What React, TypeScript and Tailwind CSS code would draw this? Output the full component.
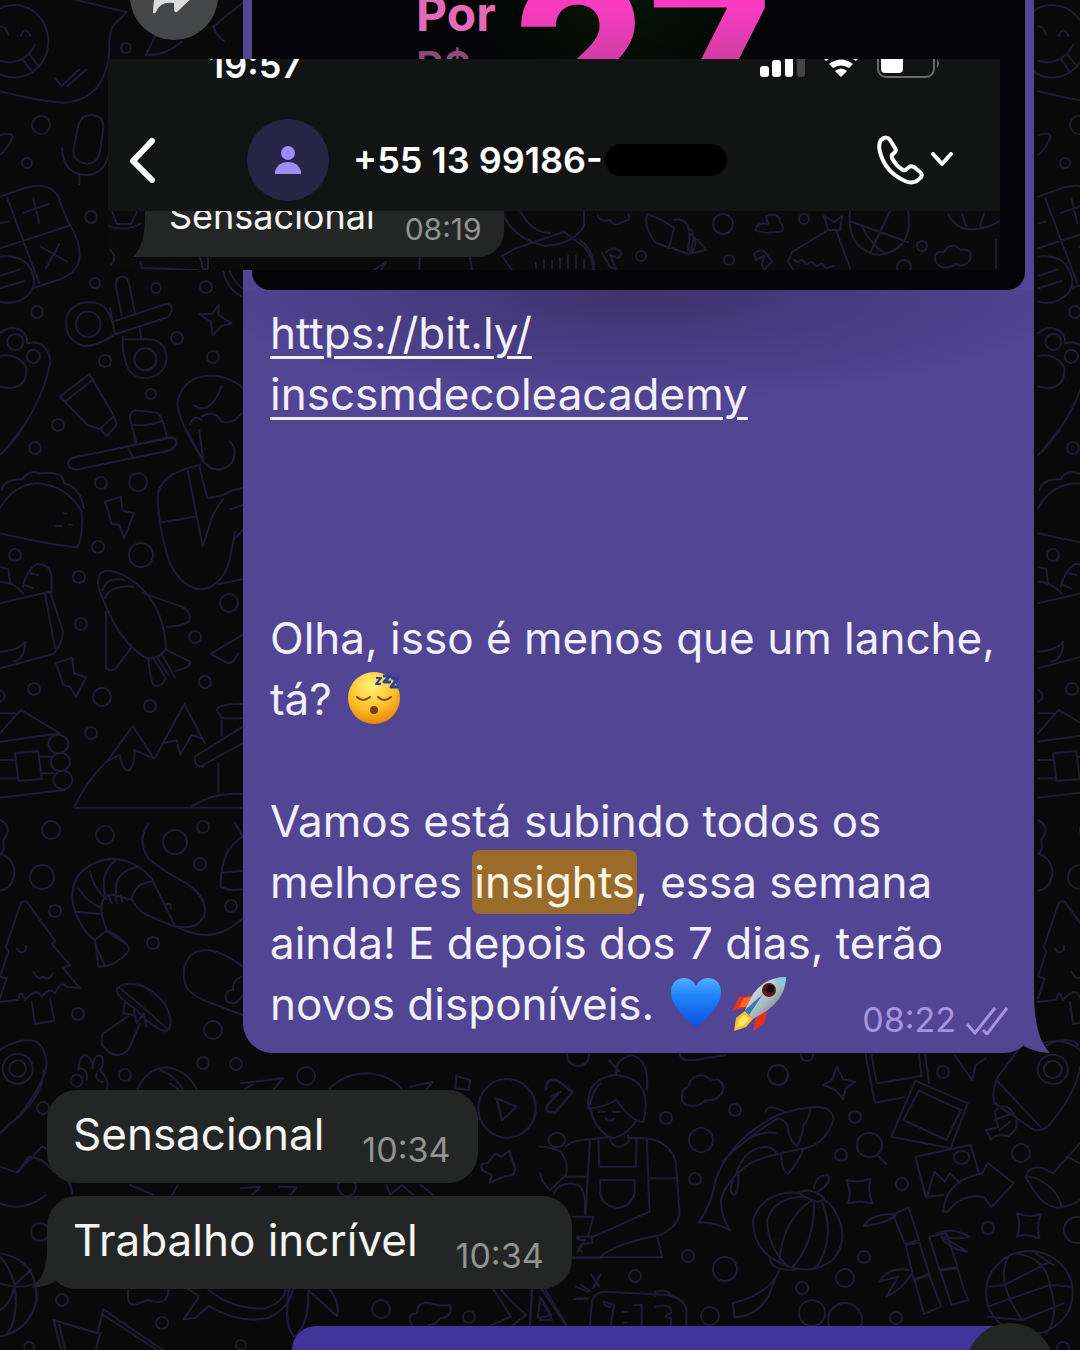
import React from 'react';

/* x, y, radius of the little rings scattered over the wallpaper */
const rings: number[][] = [
  [126, 48, 5], [41, 125, 9], [27, 163, 5], [91, 217, 6], [95, 283, 5], [156, 288, 5], [206, 287, 6],
  [37, 312, 6], [177, 338, 6], [213, 357, 6], [105, 361, 6], [151, 394, 5], [58, 425, 6], [35, 448, 6],
  [101, 483, 6], [138, 482, 9], [98, 547, 6], [141, 555, 12], [15, 555, 6], [79, 577, 6], [229, 603, 9],
  [81, 624, 6], [195, 637, 6], [34, 689, 6], [102, 697, 9], [205, 682, 6], [150, 706, 6], [91, 733, 6],
  [51, 830, 9], [105, 835, 9], [175, 842, 12], [203, 827, 6], [200, 864, 6], [42, 877, 12], [55, 911, 6],
  [231, 906, 6], [153, 943, 6], [78, 1014, 6], [213, 1030, 9], [203, 1063, 6], [236, 1064, 6],
  [125, 1075, 6], [43, 1108, 6], [306, 1076, 9], [40, 1232, 9], [347, 1187, 9], [62, 1300, 6],
  [162, 1323, 6], [381, 1309, 9], [469, 1317, 6], [29, 1347, 5], [241, 1345, 5],
  [778, 1075, 10], [666, 1118, 6], [735, 1110, 6], [701, 1140, 12], [695, 1179, 6], [841, 1155, 6],
  [855, 1117, 6], [943, 1072, 6], [1021, 1153, 9], [902, 1184, 6], [988, 1228, 6], [864, 1257, 6],
  [845, 1278, 9], [725, 1269, 12], [688, 1256, 6], [635, 1276, 6], [802, 1288, 6], [710, 1316, 9],
  [812, 1313, 13], [845, 1320, 17], [896, 1318, 6], [1077, 1230, 13], [1063, 1348, 6], [807, 1055, 6],
  [578, 1055, 11],
];

/* smiley, microphone, calculator, scissors, paw, toothpaste, hat */
const doodlesTop = [
  'M228 0L380 36L342 75Q325 95 328 150Q318 300 190 308Q130 306 0 274',
  'M-60 124a100 106 0 1 0 205 0a100 106 0 1 0 -205 0M0 183Q70 200 105 135M70 180l28 38M90 165l28 36M0 80Q15 75 24 104M62 108Q75 75 92 108',
  'M165 235l20 22l52 -48M203 258l54 -48',
  'M235 375q10 -32 42 -30q35 4 33 40l-10 70q-8 38 -40 36q-38 -4 -40 -38zM186 445q4 80 75 80q50 -2 65 -60M238 525v28',
  'M0 405Q35 395 38 410Q25 445 0 465',
  'M0 590L80 562Q150 545 175 590Q195 650 210 675Q250 740 235 790Q225 820 180 838L98 865M22 595L118 850M0 745L205 678M0 670l25 -5M70 638l75 -25M100 595l18 75M122 740l78 44M178 732l-40 72M0 770Q55 765 80 790Q120 840 90 880Q50 920 0 905M0 828l60 -20M0 865l72 -22',
  'M348 860Q345 828 370 830Q385 832 388 855L405 940M348 860L365 945M340 965L488 915Q515 905 515 930Q512 950 495 955L345 1003L330 925M368 1010Q365 1075 390 1115Q420 1145 460 1130Q505 1110 498 1060Q490 1020 445 1018L368 1018M418 980l6 38M350 1000Q290 1040 250 1038Q190 1020 200 950Q220 900 285 908Q330 915 345 1000M228 973a36 38 0 1 0 73 0a36 38 0 1 0 -73 0M403 1078a33 33 0 1 0 66 0a33 33 0 1 0 -66 0',
  'M657 915L655 945L695 970L665 978L638 1005L632 965L597 942L637 942z',
  'M670 815Q680 865 725 890M690 815Q705 850 728 865',
  'M0 1000Q30 975 60 990Q85 1005 80 1030Q140 1015 152 1085Q130 1190 70 1280L15 1350M22 1026a24 24 0 1 0 48 0a24 24 0 1 0 -48 0M80 1069a20 20 0 1 0 40 0a20 20 0 1 0 -40 0M0 1068Q50 1058 78 1100Q85 1155 35 1165L0 1160',
  'M180 1190L268 1122L340 1245L350 1275L320 1308L300 1288L262 1275zM195 1205L280 1138M300 1288L340 1250',
  'M410 1330L392 1265Q385 1230 410 1232L470 1238Q490 1250 500 1312M400 1275Q450 1280 485 1262M360 1345L505 1312Q530 1310 530 1330Q520 1350 490 1358',
  'M590 1350Q520 1230 535 1195Q560 1120 650 1128Q700 1135 728 1165M580 1215Q630 1250 665 1160M605 1250Q640 1225 665 1265Q700 1275 725 1240M570 1275Q580 1240 605 1260',
  'M438 165L470 100M440 165Q500 165 545 125M640 80Q700 30 728 8M640 80Q650 110 672 122',
];

/* taco, bolt, mouse, shuttle, cabin, mountains */
const doodlesMiddle = [
  'M65 0Q30 50 0 75M205 100Q205 85 225 82L505 25Q530 20 530 40Q525 55 505 62L235 118Q205 120 205 100M385 55l15 30M400 0l5 40',
  'M0 235Q40 165 110 160Q200 165 245 245Q250 320 232 352Q150 345 0 310M5 180Q15 145 68 148Q85 118 120 130Q190 120 192 160Q240 170 252 235M168 288h18M190 250h10M206 284h10',
  'M315 215L362 200L368 242L402 250L372 325L358 285L335 282z',
  'M560 0L610 95L598 0M610 95Q650 140 695 100Q715 60 690 35M563 120L608 350L635 265Q650 230 670 208M598 108L622 205L670 195M600 105Q470 130 473 210Q480 320 510 400Q550 480 610 478Q670 465 690 385L705 305M478 278L585 260M670 195Q690 180 728 175M690 238L728 225M705 325L728 300M655 462L728 448',
  'M295 445Q300 415 345 425Q440 460 480 560Q500 620 497 660Q470 690 440 685Q360 640 310 510Q290 470 295 445M315 505Q330 465 400 470M308 480Q320 440 372 450M425 488L545 530Q580 550 565 575Q545 590 500 590M318 545L318 715Q340 728 352 710L392 655M445 690Q450 740 460 765Q485 775 497 745L458 680M470 680L505 735M485 672L525 742M500 660L570 695Q575 715 525 722',
  'M0 520L150 485L188 600Q190 640 160 672L0 715M135 490L165 655M68 470Q80 420 110 402Q150 400 155 440V485M75 465l25 10M90 430l25 5M0 455Q40 455 70 490M0 665Q60 660 75 635Q75 690 40 695M0 410l25 8l5 40',
  'M168 700L217 683L222 730L258 742L228 802L210 770L190 765z',
  'M0 910L62 840L180 910L0 935M45 970L115 963L125 1048L55 1052zM0 990h45M0 1045h50M122 980h35M125 1030h35M145 942a30 28 0 1 0 60 0a30 28 0 1 0 -60 0M153 996a28 27 0 1 0 57 0a28 27 0 1 0 -57 0M160 1050a28 27 0 1 0 57 0a28 27 0 1 0 -57 0M0 1103L195 1080M0 850h45M0 780Q30 800 0 815',
  'M728 1133H222Q260 1050 325 990L398 888L463 988L553 822L615 940M325 992L360 975Q365 1020 385 1022Q405 1010 403 960L460 985M490 940L530 930L540 975L575 915L605 925M575 1130Q640 1085 728 1092M585 980L728 890M600 1010L728 940M585 980Q580 1010 612 1010M655 1000v85M665 915v-50h63M650 840Q655 820 728 822M650 840l15 25',
  'M728 615L632 672L685 700Q700 700 715 670',
];

/* prawn, fir tree, mushroom, pin */
const doodlesBottom = [
  'M310 120Q205 150 218 250Q240 330 285 360L320 330Q300 280 305 255Q310 220 345 225L395 240M310 120Q390 105 455 175L525 318M455 185Q410 185 395 235Q410 270 440 285L525 320M270 155Q280 205 320 238M235 205Q265 250 302 262M225 275L305 282M315 225Q300 160 345 122M350 230Q335 160 408 142M285 360L295 440Q350 440 388 390Q385 365 325 332M285 370l28 65M320 335l60 38M325 225l10 25M345 225l6 25M362 225l4 20',
  'M445 12Q410 60 445 115Q490 155 560 190Q630 240 612 290Q590 330 530 320Q640 380 728 295M495 255q18 -10 18 12',
  'M0 545L55 540Q60 500 75 540Q110 500 125 530Q150 500 165 520Q185 480 200 500L240 505L190 445L210 435L155 372L165 362L80 245Q65 240 60 255L18 380L25 395L0 470M50 385q10 20 28 5v-12M100 455q18 30 28 15q20 15 30 -10M95 545L105 612L163 602L150 535M0 470l20 5L0 535',
  'M350 510Q360 485 420 495Q500 530 512 600Q512 630 495 635Q440 610 410 570Q350 530 350 510M360 505Q430 560 500 625M375 545l-5 35l30 5M400 560l10 50l20 -30l10 40M385 588L310 640Q295 670 320 690Q350 720 385 690L420 610',
  'M728 440Q640 375 590 395Q540 420 555 490Q565 520 610 540L728 585M725 470Q695 480 700 510Q670 510 680 545Q710 560 728 525',
  'M0 690Q60 650 110 665Q150 700 135 760Q100 840 45 900M8 746a45 45 0 1 0 90 0a45 45 0 1 0 -90 0M28 746a25 25 0 1 0 50 0a25 25 0 1 0 -50 0',
  'M235 750Q240 700 260 705Q275 715 278 745Q280 700 305 708Q315 730 300 750Q330 780 320 808M212 782a18 18 0 1 0 36 0a18 18 0 1 0 -36 0M235 745q30 0 25 35M290 760q-5 25 18 25',
  'M412 808Q440 745 500 742Q560 750 590 808M480 750Q530 770 548 808M510 790l25 18',
  'M0 0Q40 20 10 60Q15 100 0 100Q50 120 42 170Q30 210 0 212M728 50Q660 90 662 200Q690 215 728 208M668 158L728 152M705 10L728 50',
];

/* lower left: pins, heart, globe, play button, camera */
const doodlesFootLeft = [
  'M115 0Q110 90 22 165L0 190M0 290L45 308L110 230Q150 245 140 300Q185 320 188 370M45 308L75 260Q110 260 140 305M0 400Q60 430 120 375',
  'M0 550Q100 570 95 690Q80 780 0 800M0 560Q30 600 38 645Q50 740 20 790M0 640Q50 660 95 640M0 720Q30 700 38 645L80 600',
  'M140 750L160 840M140 750L255 790L270 718L425 840M250 840L262 790M270 735L410 840M155 765L170 840',
  'M335 660Q330 705 350 705L385 690Q440 710 440 660M490 655L520 680L480 748L510 745L545 708Q620 760 700 745Q760 710 765 655M545 660Q610 720 690 715Q740 700 748 655M755 660Q740 770 770 800Q810 760 805 660M805 660L880 738Q890 700 860 655',
  'M630 40L740 25L715 58M640 58l20 -15M860 58Q900 10 960 10Q1020 15 1050 58M1070 50L1130 36L1115 58M1192 18L1228 30L1225 60L1190 55z',
  'M1250 115a75 88 0 1 0 150 0a75 88 0 1 0 -150 0M1297 85L1350 110L1312 150z',
  'M1425 60Q1430 20 1462 35L1495 68L1450 130Q1420 130 1430 105L1465 65L1440 80M1540 110Q1550 60 1568 40M1540 110Q1555 170 1568 175',
  'M1260 300Q1250 280 1275 278L1295 250L1310 262L1330 242L1345 290Q1350 320 1320 318L1280 338L1285 315z',
  'M630 355L680 350L660 374M730 350L775 352L760 374M340 345L400 374M465 345L450 374M1010 345L1020 374L1050 345L1080 374M1100 345L1130 374',
  'M1075 765Q1060 730 1090 730Q1090 690 1125 700Q1150 710 1175 705Q1185 740 1150 745Q1140 765 1120 765M1290 660L1335 740L1285 765M1310 660Q1330 690 1375 735L1340 765M1385 765L1390 658M1425 660L1480 765M1405 745L1412 680L1440 735z',
  'M1495 565h73M1510 500L1545 498L1548 520Q1500 520 1520 545M1505 650l30 15M1500 688h35M1550 655l18 -40',
];

/* lower right: baker, koi, lantern, photos, bamboo, globe */
const doodlesFootRight = [
  'M140 205Q135 130 190 112Q230 95 280 125Q320 160 300 245Q270 250 222 180Q180 205 140 205M148 210Q155 260 205 295Q250 290 280 240M222 105Q215 60 265 45Q320 60 310 150M200 60l30 35M170 215h18M212 215h18M190 235q15 15 25 0',
  'M205 290V305Q225 335 258 305L255 285M75 320Q90 300 150 297L205 292M255 293L310 295Q380 305 395 370L405 520Q400 560 350 585Q220 610 175 650M145 300L132 525M170 300L172 380H278L280 300M310 300L318 515L155 590M175 420H275V460Q260 505 220 503Q180 495 175 460zM320 415H400M75 410H135M95 530H155L140 585M110 590Q100 600 130 600Q120 620 110 635M95 652H355L340 590',
  'M0 320Q30 320 60 335Q85 370 75 405L30 450Q5 430 0 400M40 460Q60 420 110 435Q135 450 130 520M25 300a24 22 0 1 0 48 0a24 22 0 1 0 -48 0',
  'M20 145Q10 120 45 118L95 155L45 215Q15 225 22 195L55 155',
  'M412 175Q410 145 430 140Q440 100 480 108Q500 125 515 118Q540 130 528 160Q510 185 480 180Q460 205 425 195Q412 190 412 175M405 42Q410 65 450 60L540 45',
  'M690 225Q850 170 852 240Q830 310 770 325Q660 345 610 370Q540 420 525 480Q525 530 552 572Q510 545 460 548Q500 490 510 420Q550 300 690 225M655 215Q660 190 710 215M690 235Q720 240 720 270Q730 310 745 318Q760 300 765 255Q780 240 785 205M600 300Q650 270 685 280M530 365Q590 300 690 235M570 400Q590 330 650 320Q680 320 690 345M700 345Q700 390 720 402Q750 370 765 325M560 420Q545 460 565 465Q580 440 575 400',
  'M750 458Q650 450 618 540Q620 630 690 665Q780 715 850 660Q900 600 860 520Q840 480 820 480M750 458Q790 440 825 475Q810 500 750 458M765 470Q680 470 660 540Q660 620 720 680M790 480Q705 540 695 660M795 485Q800 600 735 680M820 488Q860 600 800 685M668 655Q665 690 740 690M795 445Q800 405 835 405Q850 425 808 455M695 690Q670 760 560 790L565 832Q630 830 665 765L685 710',
  'M945 42L972 188L1058 172M962 42L978 130L1108 108L1100 42M1118 42L1130 130M1090 122L1242 190L1192 325L1020 290zM1100 152L1222 210L1180 300L1055 240zM1090 350L1250 315L1275 400M1090 350L1120 470L1170 465M1202 352a22 20 0 1 0 44 0a22 20 0 1 0 -44 0M1125 465L1145 395L1175 425L1190 400L1220 430',
  'M1170 515Q1180 420 1285 400L1300 368L1375 430L1310 502L1290 472Q1220 460 1185 515z',
  'M862 80L880 118L915 125L888 145L880 178L858 150L822 135L848 120zM890 420Q925 430 960 415Q950 455 965 490Q930 480 895 490Q905 455 890 420M1385 520Q1420 535 1455 522Q1440 555 1450 595Q1415 580 1385 590Q1398 555 1385 520',
  'M920 315a36 36 0 1 0 73 0a36 36 0 1 0 -73 0M980 345L1005 372',
  'M1025 525L1070 502L1100 600L1060 612zM1062 615L1102 608L1130 700L1085 718zM1088 720L1130 705L1165 800L1115 822zM1130 590L1180 580L1212 680L1160 690zM1162 692L1212 685L1242 780L1195 795zM940 558Q960 520 1035 522Q1010 550 940 558M1150 580Q1200 560 1248 590Q1220 600 1170 590L1240 635Q1190 630 1165 590M1070 690Q1010 680 985 725L1040 710L1005 770Q1050 750 1080 700',
  'M1295 758a126 125 0 1 0 252 0a126 125 0 1 0 -252 0M1360 650Q1320 720 1400 840L1520 790M1375 640Q1470 650 1480 735Q1510 830 1470 880M1305 740L1350 735L1480 665M1300 800L1480 735L1540 740M1405 840L1300 830M1440 640L1490 675',
  'M1410 0L1330 110Q1310 150 1320 190L1435 270Q1470 275 1490 240Q1560 150 1568 80M1325 120L1460 268M1568 30Q1520 -10 1460 10M1445 88a44 44 0 1 0 88 0a44 44 0 1 0 -88 0M1463 88a26 26 0 1 0 52 0a26 26 0 1 0 -52 0M1205 48L1255 120L1265 75L1295 55M1320 215Q1350 180 1375 220Q1400 260 1360 288Q1320 280 1310 300L1295 270L1330 262L1320 215M1320 240l50 -20M1335 270l30 -25',
  'M1410 410Q1420 375 1460 385L1490 400L1568 310M1415 410Q1450 410 1490 450Q1520 490 1510 502Q1460 510 1410 410M1530 350L1568 370M1510 502Q1550 495 1568 480',
  'M145 855L150 790Q155 755 190 755L370 765Q420 775 425 810V855M335 768V755Q375 745 382 770M185 785L215 795L205 855M185 785Q185 800 205 800M240 815h12M240 848h12M275 795L295 795V855M335 800Q385 790 380 820Q350 830 380 835V855M120 735l25 18M150 705l22 35M108 775h30M10 790L35 840H0M0 740L75 855',
];

type DoodleProps = { paths: string[]; transform: string };

const Doodles: React.FC<DoodleProps> = ({ paths, transform }) => (
  <g transform={transform}>
    {paths.map((d) => (
      <path key={d} d={d} strokeWidth="6" />
    ))}
  </g>
);

const Wallpaper: React.FC = () => (
  <svg
    aria-hidden="true"
    className="absolute inset-0 h-full w-full"
    viewBox="0 0 1080 1350"
    preserveAspectRatio="xMidYMin slice"
    fill="none"
    stroke="#1f1b35"
    strokeWidth="2"
    strokeLinejoin="round"
    strokeLinecap="round"
  >
    <g id="tile">
      <Doodles paths={doodlesTop} transform="scale(.3333)" />
      <Doodles paths={doodlesMiddle} transform="translate(0 430) scale(.3333)" />
      <Doodles paths={doodlesBottom} transform="translate(0 820) scale(.3333)" />
    </g>
    {/* the pattern repeats past the outgoing bubble */}
    <svg x="1034" y="0" width="46" height="1046" viewBox="-4 0 46 1046">
      <use href="#tile" />
      {rings.filter((r) => r[0] < 60 && r[1] < 1040).map(([x, y, r]) => (
        <circle key={`${x}-${y}`} cx={x} cy={y} r={r} />
      ))}
    </svg>
    <Doodles paths={doodlesFootLeft} transform="translate(0 1070) scale(.3827 .3333)" />
    <Doodles paths={doodlesFootRight} transform="translate(540 1040) scale(.3444 .3333)" />
    {rings.map(([x, y, r]) => (
      <circle key={`${x}-${y}`} cx={x} cy={y} r={r} />
    ))}
  </svg>
);

const HeaderWallpaper: React.FC = () => (
  <svg
    aria-hidden="true"
    className="absolute inset-0 h-full w-full"
    viewBox="108 211 892 59"
    preserveAspectRatio="xMaxYMin slice"
    fill="none"
    stroke="#1f1c35"
    strokeWidth="2"
    strokeLinecap="round"
    strokeLinejoin="round"
  >
    <path d="M108 226q18 6 32 -2M112 211l5 13l14 0l6 -13M110 250q8 6 1 15M140 262l2 6l55 2M200 257l3 12l5 0l0 -12M420 257l-1 13M470 257l2 13M374 270l12 -8l-5 8" />
    <path d="M504 216q10 22 40 30q30 -2 40 -20l0 -15M502 256l14 -8l48 -16l14 10q15 10 15 28M502 256l10 14M536 268v-5M544 268v-8M552 268v-7M560 268v-10M568 268v-12M576 268v-12M584 268v-8M520 211q12 22 30 22" />
    <path d="M580 240q14 10 14 30M598 216q2 6 12 4q4 8 12 2q10 -2 6 -8M606 252q10 -8 16 2l-4 4l-8 -3l6 14l-6 -2l-8 -14M647 214q-4 12 8 28l14 6l5 -20q-10 -8 -27 -14M674 220q20 -4 14 30M688 228q10 4 2 24M690 234q10 4 2 18M698 240l8 10l-18 4l-16 -6" />
    <circle cx="723" cy="224" r="10" />
    <circle cx="641" cy="256" r="5" />
    <circle cx="729" cy="260" r="5" />
    <circle cx="804" cy="219" r="5" />
    <circle cx="922" cy="246" r="5" />
    <circle cx="904" cy="267" r="7" />
    <path d="M756 230q0 -8 12 -6l-2 -8q14 -4 14 6q8 10 -4 10q-14 2 -20 -2M824 216l4 14l12 0l2 -14l-8 6zM828 230l-36 22l-4 10l6 8M836 230l14 38M794 260l4 2l4 -2l4 4l6 -2l4 4l6 -2l4 4l8 -2M754 254q8 -8 14 2l4 6l-8 8l-2 -6l2 -8l-8 4z" />
    <path d="M850 211q-4 40 30 44q34 -6 28 -44M852 222l56 20M890 211l-20 42M862 226q8 18 24 28M936 262q-4 -12 8 -10q8 -12 16 -2q14 -2 10 10q-6 8 -14 4q-14 8 -20 -2M948 214q10 20 34 14q12 -2 18 -8M962 214l4 12M984 214l-4 12M996 240v28" />
  </svg>
);

const ForwardArrow: React.FC = () => (
  <svg aria-hidden="true" viewBox="0 0 48 48" className="size-12" fill="#dcdcdc">
    <path d="M3 45Q3 14 24 14V3L47 25L28 43Q25 46 24 42V35Q10 33 6 44Q4 46 3 45Z" />
  </svg>
);

const SleepyFace: React.FC = () => (
  <svg role="img" aria-label="😴" viewBox="0 0 56 56" className="inline-block size-14 align-[-12px]">
    <defs>
      <radialGradient id="face" cx="45%" cy="25%" r="75%">
        <stop offset="0" stopColor="#fff27a" />
        <stop offset=".6" stopColor="#fdc22b" />
        <stop offset="1" stopColor="#e8860c" />
      </radialGradient>
    </defs>
    <circle cx="30" cy="27" r="26" fill="url(#face)" />
    <g fill="none" stroke="#7a4a08" strokeWidth="2" strokeLinecap="round">
      <path d="M13 26q6 6 13 0M34 26q6 6 13 0" />
    </g>
    <ellipse cx="30" cy="39" rx="4" ry="4" fill="#7a3d10" />
    <g fill="none" stroke="#27449a" strokeWidth="2" strokeLinejoin="round">
      <path d="M32 7h5l-5 6h5" />
      <path d="M39 5h7l-6 6h7" strokeWidth="3" />
      <path d="M47 7h7l-7 9h8" strokeWidth="3" />
    </g>
  </svg>
);

const BlueHeart: React.FC = () => (
  <svg role="img" aria-label="💙" viewBox="0 0 56 56" className="inline-block size-14 align-[-12px]">
    <defs>
      <linearGradient id="heart" x1="0" y1="0" x2="0" y2="1">
        <stop offset="0" stopColor="#4fb0ff" />
        <stop offset=".35" stopColor="#2183fa" />
        <stop offset="1" stopColor="#0a50e0" />
      </linearGradient>
    </defs>
    <path d="M29 52C21 43 4 32 4 16C4 7 10 2 17 2C23 2 27 6 29 10C31 6 35 2 41 2C48 2 54 7 54 16C54 32 37 43 29 52Z" fill="url(#heart)" />
  </svg>
);

const Rocket: React.FC = () => (
  <svg role="img" aria-label="🚀" viewBox="0 0 56 56" className="ml-2 inline-block size-14 align-[-12px]">
    <defs>
      <linearGradient id="hull" x1="0" y1="0" x2="1" y2="1">
        <stop offset="0" stopColor="#f4f7f8" />
        <stop offset=".55" stopColor="#a9b9bf" />
        <stop offset="1" stopColor="#4d5a60" />
      </linearGradient>
    </defs>
    <path d="M22 20L8 21L1 35L16 31Z" fill="#e5301c" />
    <path d="M22 20L13 22L8 31L16 31Z" fill="#f5672c" />
    <path d="M36 33L34 47L22 55L25 39Z" fill="#e5301c" />
    <path d="M14 35L5 42L3 55L15 51L22 43Z" fill="#fbc12d" />
    <path d="M13 39L8 44L6 51L13 49L18 43Z" fill="#ffe974" />
    <path d="M55 1Q34 1 22 18L14 34L22 43L37 34Q55 20 55 1Z" fill="url(#hull)" />
    <path d="M55 1Q49 1 44 4L52 12Q55 6 55 1Z" fill="#7fd0da" />
    <path d="M32 18L14 34L18 39Z" fill="#3278b8" />
    <circle cx="38" cy="14" r="7" fill="#5b1a18" />
    <circle cx="39" cy="13" r="4" fill="#140808" />
  </svg>
);

const SentTicks: React.FC = () => (
  <svg aria-hidden="true" viewBox="0 0 42 28" className="h-7 w-[42px] shrink-0" fill="none" stroke="#a695dc" strokeWidth="3">
    <path d="M1 17L9 26L29 1" />
    <path d="M17 23L21 27L41 1" />
  </svg>
);

type BubbleProps = { text: string; time: string; tail?: boolean };

const Incoming: React.FC<BubbleProps> = ({ text, time, tail }) => (
  <div className="relative flex h-[93px] items-start rounded-[30px] bg-[#242625] pt-[14px] pr-7 pl-[26px]">
    <p className="text-[44px] leading-[61px] text-[#f4f4f4]">{text}</p>
    <time className="ml-[38px] pt-[26px] text-[34px] leading-[40px] text-[#919392]">{time}</time>
    {tail && (
      <svg aria-hidden="true" viewBox="0 0 46 40" className="absolute bottom-0 -left-4 h-10 w-[46px]" fill="#242625">
        <path d="M16 0Q16 28 0 39Q14 38 25 32Q34 40 46 40V0Z" />
      </svg>
    )}
  </div>
);

const StatusBar: React.FC = () => (
  <div className="-mt-4 flex h-11 items-center pr-[60px] pl-[101px] text-white">
    <time className="text-[36px] leading-[44px] font-semibold">19:57</time>
    <svg aria-hidden="true" viewBox="0 0 180 32" className="ml-auto h-8 w-[180px]">
      <rect x="0" y="17" width="9" height="11" rx="3" fill="#fff" />
      <rect x="12" y="11" width="9" height="17" rx="3" fill="#fff" />
      <rect x="25" y="5" width="8" height="23" rx="3" fill="#fff" />
      <rect x="37" y="0" width="8" height="28" rx="3" fill="#454545" />
      <path d="M81 28l-6 -6q6 -5 12 0zM69 15q12 -9 24 0l-4 4q-8 -5 -16 0zM62 8q19 -15 38 0l-4 4q-15 -11 -30 0z" fill="#fff" />
      <rect x="118" y="0" width="56" height="28" rx="8" fill="none" stroke="#6b6b6b" strokeWidth="2" />
      <rect x="121" y="3" width="22" height="21" rx="4" fill="#fff" />
      <path d="M177 10q4 4 0 9z" fill="#6b6b6b" />
    </svg>
  </div>
);

const ChatHeader: React.FC = () => (
  <header className="absolute top-[59px] right-20 left-[108px] z-10 overflow-hidden">
    <div className="h-[152px] overflow-hidden bg-[#121313]">
      <StatusBar />
      <div className="mt-8 flex items-center pr-[46px] pl-5">
        <button type="button" aria-label="Voltar">
          <svg viewBox="0 0 28 46" className="h-[46px] w-7" fill="none" stroke="#fff" strokeWidth="6" strokeLinecap="round" strokeLinejoin="round">
            <path d="M24 4L5 24L24 43" />
          </svg>
        </button>
        <div className="ml-[91px] flex size-[82px] items-center justify-center rounded-full bg-[#282448]">
          <svg aria-hidden="true" viewBox="0 0 26 28" className="h-7 w-[26px]" fill="#9d8cf6">
            <circle cx="13" cy="7" r="7" />
            <path d="M0 28V25Q3 16 13 16Q23 16 26 25V28Z" />
          </svg>
        </div>
        <h1 className="ml-6 flex items-center text-[36px] leading-10 font-semibold whitespace-nowrap text-white">
          +55 13 99186-
          <span className="ml-0.5 h-8 w-[122px] rounded-full bg-black" />
        </h1>
        <button type="button" aria-label="Ligar" className="ml-auto flex items-center gap-1.5">
          <svg viewBox="0 0 48 50" className="h-[50px] w-12" fill="none" stroke="#fff" strokeWidth="4" strokeLinejoin="round">
            <path d="M5 5Q10 0 14 5L19 13Q21 16 18 18Q15 20 16 23Q20 31 27 35Q29 36 32 33Q34 30 38 32L43 36Q48 40 44 43Q38 50 29 46Q9 37 4 17Q2 9 5 5Z" />
          </svg>
          <svg viewBox="0 0 24 16" className="h-4 w-6" fill="none" stroke="#fff" strokeWidth="4" strokeLinecap="round" strokeLinejoin="round">
            <path d="M3 2L12 12L21 2" />
          </svg>
        </button>
      </div>
    </div>
    <div className="relative h-[59px] overflow-hidden bg-[#0a0a0b]">
      <HeaderWallpaper />
      <div className="relative -mt-8 ml-[37px] flex h-[78px] w-fit items-start rounded-[26px] bg-[#242625] pr-[22px] pl-6">
        <p className="pt-[13px] text-[36px] leading-[48px] text-[#f4f4f4]">Sensacional</p>
        <time className="ml-[30px] pt-[34px] text-[30px] leading-8 text-[#919392]">08:19</time>
        <svg aria-hidden="true" viewBox="0 0 40 40" className="absolute bottom-0 -left-3 size-10" fill="#242625">
          <path d="M12 0Q12 28 0 40H36V0Z" />
        </svg>
      </div>
    </div>
  </header>
);

const PromoCard: React.FC = () => (
  <div className="mx-[9px] flex h-[290px] items-start overflow-hidden rounded-b-[18px] bg-[#040307] bg-[radial-gradient(160px_110px_at_48%_0,#061505,transparent)] pl-[164px]">
    <div className="-mt-4">
      <p className="text-[48px] leading-[60px] font-bold text-[#e46ab6]">Por</p>
      <p className="text-[42px] leading-[46px] font-semibold text-[#8d4a74]">R$</p>
    </div>
    <p className="-mt-[60px] ml-4 bg-linear-to-b from-[#f73cc0] from-30% to-[#b53c90] to-70% bg-clip-text text-[212px] leading-[230px] font-extrabold text-transparent">
      27
    </p>
  </div>
);

const App: React.FC = () => {
  return (
    <main className="relative min-h-screen overflow-hidden bg-[#090909] font-['Inter','Liberation_Sans',sans-serif]">
      <Wallpaper />
      <ChatHeader />
      <button
        type="button"
        aria-label="Encaminhar"
        className="absolute -top-12 left-[130px] flex size-[88px] items-end justify-center rounded-full bg-[#454647] pb-6"
      >
        <ForwardArrow />
      </button>

      <div className="relative flex flex-col">
        {/* outgoing message */}
        <article className="relative mr-[46px] ml-[243px] rounded-b-[30px] bg-[#514594]">
          <PromoCard />
          <div className="bg-[radial-gradient(55%_110px_at_50%_0,#3d326b,transparent)] pt-[13px] pr-[26px] pb-[18px] pl-[27px] text-[44px] leading-[61px] text-[#f3f0fd]">
            <a href="https://bit.ly/inscsmdecoleacademy" className="underline decoration-[3px] underline-offset-[7px]">
              https://bit.ly/
              <br />
              inscsmdecoleacademy
            </a>
            <p className="mt-[183px]">
              Olha, isso é menos que um lanche,
              <br />
              tá? <SleepyFace />
            </p>
            <p className="mt-[61px]">
              Vamos está subindo todos os
              <br />
              melhores <mark className="-mx-0.5 rounded-lg bg-[#9b6b2c] px-0.5 py-[5px] text-[#fff6e6]">insights</mark>, essa semana
              <br />
              ainda! E depois dos 7 dias, terão
            </p>
            <div className="flex justify-between">
              <p className="whitespace-nowrap">
                novos disponíveis. <BlueHeart />
                <Rocket />
              </p>
              <div className="flex items-end gap-2.5">
                <time className="text-[34px] leading-[30px] text-[#a695dc]">08:22</time>
                <SentTicks />
              </div>
            </div>
          </div>
          <svg aria-hidden="true" viewBox="0 0 26 60" className="absolute -right-4 bottom-0 h-[60px] w-[26px]" fill="#514594">
            <path d="M10 0Q10 44 26 60Q10 59 0 53L9 20Z" />
          </svg>
        </article>

        <div className="mt-[37px] ml-[47px] flex flex-col items-start gap-[13px]">
          <Incoming text="Sensacional" time="10:34" />
          <Incoming text="Trabalho incrível" time="10:34" tail />
        </div>

        {/* next outgoing message, just coming into view */}
        <div className="mt-[37px] mr-[46px] ml-[292px] flex h-6 justify-end rounded-t-[24px] bg-[#43349a]">
          <span className="-mt-[3px] -mr-5 h-[27px] w-[88px] overflow-hidden">
            <span className="block size-[88px] rounded-full bg-[#242625]" />
          </span>
        </div>
      </div>
    </main>
  );
};

export default App;
